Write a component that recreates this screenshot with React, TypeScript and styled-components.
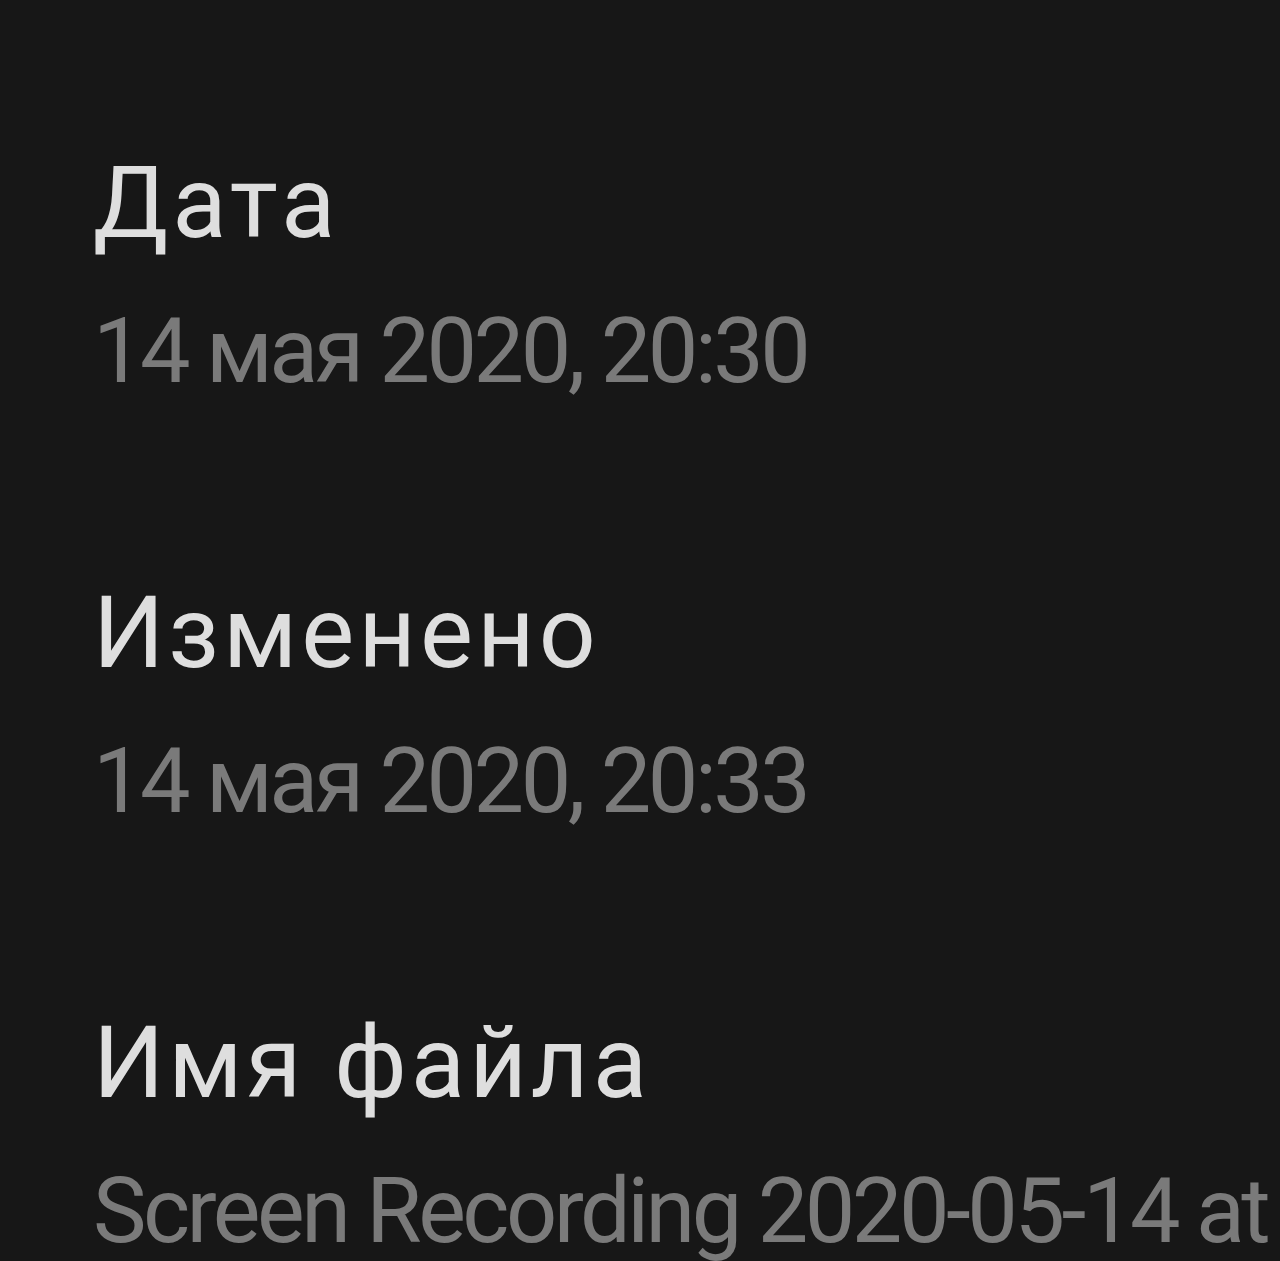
import styled, { createGlobalStyle } from "styled-components";

const GlobalStyle = createGlobalStyle`
    html, body {
        margin: 0;
        padding: 0;
        background: #171717;
    }
    body {
        font-family: Roboto, "Noto Sans", "DejaVu Sans", sans-serif;
        overflow: hidden;
    }
`;

const Screen = styled.div`
    width: 1280px;
    height: 1261px;
    overflow: hidden;
    background: #171717;
    padding: 143px 0 0 93px;
    box-sizing: border-box;
    display: flex;
    flex-direction: column;
    gap: 161px;
`;

const Section = styled.div`
    display: flex;
    flex-direction: column;
    gap: 29px;
`;

const Label = styled.div`
    font-size: 100px;
    line-height: 120px;
    color: #dedede;
    letter-spacing: 4px;
    white-space: nowrap;
`;

// values wrap onto further lines (below the visible area for the long file name)
const Value = styled.div`
    font-size: 90px;
    line-height: 120px;
    color: #7a7a7a;
    letter-spacing: -3.5px;
`;

const details = [
    { label: "Дата", value: "14 мая 2020, 20:30" },
    { label: "Изменено", value: "14 мая 2020, 20:33" },
    { label: "Имя файла", value: "Screen Recording 2020-05-14 at 20.30.12.mov" },
];

const App = () => {
    return (
        <>
            <GlobalStyle />
            <Screen>
                {details.map((d) => (
                    <Section key={d.label}>
                        <Label>{d.label}</Label>
                        <Value>{d.value}</Value>
                    </Section>
                ))}
            </Screen>
        </>
    );
};

export default App;
